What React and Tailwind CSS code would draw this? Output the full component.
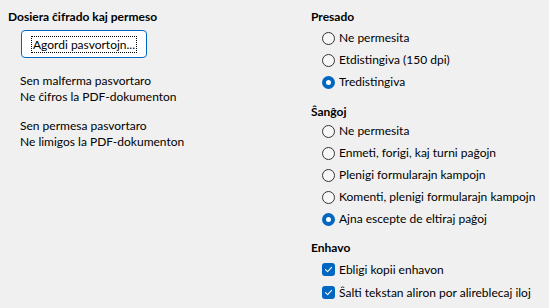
import * as React from "react"

function Radio({ checked, label }) {
  return (
    <div className="flex h-[22px] items-center whitespace-nowrap">
      {checked ? (
        <span className="flex h-[13px] w-[13px] shrink-0 items-center justify-center rounded-full bg-[#0067c0]">
          <span className="h-[5px] w-[5px] rounded-full bg-white" />
        </span>
      ) : (
        <span className="h-[13px] w-[13px] shrink-0 rounded-full border border-[#333333] bg-[#f7f7f7]" />
      )}
      <span className="ml-[4px]">{label}</span>
    </div>
  )
}

function Check({ label }) {
  return (
    <div className="flex h-[23px] items-center whitespace-nowrap">
      <span className="flex h-[13px] w-[13px] shrink-0 items-center justify-center rounded-[3px] bg-[#0067c0]">
        <svg width="9" height="9" viewBox="0 0 9 9" fill="none">
          <path d="M1.5 4.7 L3.6 6.7 L7.6 2.3" stroke="white" strokeWidth="1.1" strokeLinecap="round" strokeLinejoin="round" />
        </svg>
      </span>
      <span className="ml-[4px]">{label}</span>
    </div>
  )
}

export default function App() {
  return (
    <div
      className="flex h-[308px] w-[549px] bg-[#f0f0f0] text-[12px] leading-[16px] text-black"
      style={{ fontFamily: '"Segoe UI", Lato, "Noto Sans", sans-serif' }}
    >
      {/* Left column */}
      <div className="w-[303px] pl-[8px] pt-[9px]">
        <div className="font-bold">Dosiera ĉifrado kaj permeso</div>
        <div className="ml-[13px] mt-[5px] flex h-[28px] w-[126px] items-center rounded-[4px] border border-[#0067c0] bg-white pl-[9px]">
          <span className="border border-dotted border-black px-[1px] leading-[15px]">Agordi pasvortojn...</span>
        </div>
        <div className="ml-[12px] mt-[15px]">
          <div>Sen malferma pasvortaro</div>
          <div>Ne ĉifros la PDF-dokumenton</div>
        </div>
        <div className="ml-[12px] mt-[13px]">
          <div>Sen permesa pasvortaro</div>
          <div>Ne limigos la PDF-dokumenton</div>
        </div>
      </div>

      {/* Right column */}
      <div className="flex-1 pl-[8px] pt-[9px]">
        <div className="font-bold">Presado</div>
        <div className="ml-[11px] mt-[2px]">
          <Radio label="Ne permesita" />
          <Radio label="Etdistingiva (150 dpi)" />
          <Radio checked label="Tredistingiva" />
        </div>
        <div className="mt-[11px] font-bold">Ŝanĝoj</div>
        <div className="ml-[11px]">
          <Radio label="Ne permesita" />
          <Radio label="Enmeti, forigi, kaj turni paĝojn" />
          <Radio label="Plenigi formularajn kampojn" />
          <Radio label="Komenti, plenigi formularajn kampojn" />
          <Radio checked label="Ajna escepte de eltiraj paĝoj" />
        </div>
        <div className="mt-[10px] font-bold">Enhavo</div>
        <div className="ml-[11px] mt-[2px]">
          <Check label="Ebligi kopii enhavon" />
          <Check label="Ŝalti tekstan aliron por alireblecaj iloj" />
        </div>
      </div>
    </div>
  )
}
